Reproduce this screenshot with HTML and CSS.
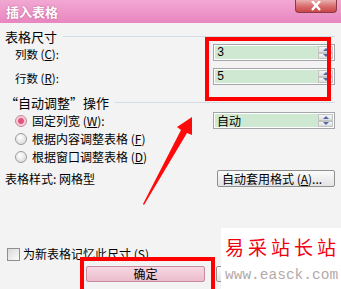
FILE: index.html
```html
<!doctype html>
<html lang="zh-CN">
<head>
	<meta charset="utf-8">
	<title>插入表格</title>
	<link rel="stylesheet" href="styles.css">
</head>
<body>
	<div class="dialog">

		<div class="titlebar">
			<span class="title">插入表格</span>
			<span class="close">
				<svg width="14" height="10" viewBox="0 0 14 10"><path d="M3 0 L11 9 M11 0 L3 9" stroke="#fff" stroke-width="2.4"/></svg>
			</span>
		</div>

		<div class="content">

			<div class="group-head group-head--first"><span>表格尺寸</span><i class="rule"></i></div>

			<div class="field-row field-row--first">
				<span class="label">列数 (<u>C</u>):</span>
				<div class="spin"><span class="spin-value">3</span><span class="spin-btns"><b class="up"></b><b class="down"></b></span></div>
			</div>

			<div class="field-row field-row--second">
				<span class="label">行数 (<u>R</u>):</span>
				<div class="spin"><span class="spin-value">5</span><span class="spin-btns"><b class="up"></b><b class="down"></b></span></div>
			</div>

			<div class="group-head group-head--second"><span>“自动调整”操作</span><i class="rule"></i></div>

			<div class="radio-block">
				<div class="radio-list">
					<label class="radio-row"><span class="radio radio--checked"></span>固定列宽 (<u>W</u>):</label>
					<label class="radio-row"><span class="radio"></span>根据内容调整表格 (<u>F</u>)</label>
					<label class="radio-row"><span class="radio"></span>根据窗口调整表格 (<u>D</u>)</label>
				</div>
				<div class="spin spin--select"><span class="spin-value">自动</span><span class="spin-btns"><b class="up"></b><b class="down"></b></span></div>
			</div>

			<div class="style-row">
				<span>表格样式: 网格型</span>
				<span class="btn btn--auto">自动套用格式 (<u>A</u>)...</span>
			</div>

			<label class="check-row"><span class="checkbox"></span>为新表格记忆此尺寸 (<u>S</u>)</label>

			<div class="buttons">
				<span class="btn btn--ok">确定</span>
				<span class="btn btn--cancel"></span>
			</div>

		</div>

		<!-- пометки поверх скриншота -->
		<div class="mark mark--inputs"></div>
		<div class="mark mark--ok"></div>
		<svg class="arrow" width="341" height="289" viewBox="0 0 341 289">
			<polygon points="192,117 192,135 187,133 144,205 143,204 181,130 177,127" fill="#ff0a0a"/>
		</svg>

		<div class="watermark">
			<div class="watermark-title">易采站长站</div>
			<div class="watermark-url">www.easck.com</div>
		</div>

	</div>
</body>
</html>
```

FILE: styles.css
```css
* {
	box-sizing: border-box;
	margin: 0;
	padding: 0;
}

body {
	background: #f3f3f3;
	font: 12px/1 "Noto Sans CJK SC", "DejaVu Sans", sans-serif;
	color: #000;
}

u {
	text-decoration: underline;
	text-underline-offset: 1px;
}

.dialog {
	position: relative;
	width: 341px;
	height: 289px;
	overflow: hidden;
	background: #f3f3f3;
}

/* Заголовок окна */

.titlebar {
	display: flex;
	justify-content: space-between;
	align-items: flex-start;
	height: 23px;
	padding-left: 6px;
	background: linear-gradient(#f2a8d3, #e886bf);
}

.title {
	margin-top: 5px;
	color: #fff;
	font-size: 13px;
	font-weight: 700;
	text-shadow: 0 0 2px rgba(140, 40, 90, .5);
}

.close {
	display: flex;
	justify-content: center;
	align-items: center;
	width: 42px;
	height: 13px;
	margin-right: 4px;
	background: linear-gradient(#eab0b0, #d86a6a 55%, #c84848);
	border: 1px solid #8c3b46;
	border-top: none;
	border-radius: 0 0 4px 4px;
}

/* Содержимое */

.content {
	padding: 0 6px 0 5px;
}

.group-head {
	display: flex;
	align-items: center;
	height: 14px;
	font-size: 13px;
}

.group-head--first {
	margin-top: 6px;
}

.group-head--second {
	margin-top: 10px;
}

.rule {
	flex: 1;
	height: 1px;
	margin-left: 6px;
	background: #d3dce4;
}

.field-row {
	display: flex;
	justify-content: space-between;
	align-items: center;
	height: 17px;
	padding-left: 10px;
}

.field-row--first {
	margin-top: 1px;
}

.field-row--second {
	margin-top: 7px;
}

.label {
	padding-top: 4px;
	font-size: 11.5px;
}

.spin {
	display: flex;
	width: 122px;
	height: 17px;
	padding: 1px;
	background: #fff;
	border: 1px solid #a2a6aa;
}

.spin-value {
	flex: 1;
	padding: 1px 0 0 2px;
	background: #cfe8d1;
	font-family: "Liberation Mono", "Noto Sans CJK SC", monospace;
	font-size: 12px;
}

.spin--select .spin-value {
	font-family: "Noto Sans CJK SC", sans-serif;
}

.spin-btns {
	display: flex;
	flex-direction: column;
	width: 15px;
}

.spin-btns b {
	display: flex;
	flex: 1;
	justify-content: center;
	align-items: center;
	background: linear-gradient(#f7f7f7, #dcdcdc);
	border: 1px solid #c4c4c4;
}

.spin-btns b::after {
	content: "";
	border-right: 3px solid transparent;
	border-left: 3px solid transparent;
}

.up::after {
	border-bottom: 3px solid #5368a8;
}

.down::after {
	border-top: 3px solid #5368a8;
}

/* Радиокнопки */

.radio-block {
	display: flex;
	justify-content: space-between;
	align-items: flex-start;
	margin-top: 3px;
}

.radio-list {
	display: flex;
	flex-direction: column;
	gap: 1px;
}

.radio-row {
	display: flex;
	align-items: center;
	height: 17px;
	padding-left: 10px;
}

.radio {
	width: 12px;
	height: 12px;
	margin-right: 5px;
	background: radial-gradient(circle at 40% 35%, #fff, #d2d2d2);
	border: 1px solid #9c9c9c;
	border-radius: 50%;
}

.radio--checked {
	background: radial-gradient(circle, #e2557a 0 2.5px, #f5c7d4 3.5px, #f8dfe7);
	border-color: #c7889a;
}

.style-row {
	display: flex;
	justify-content: space-between;
	align-items: center;
	margin-top: 5px;
}

.btn {
	display: flex;
	justify-content: center;
	align-items: center;
	height: 17px;
	border: 1px solid #8e8f8f;
	border-radius: 2px;
	background: linear-gradient(#fbfbfb, #e3e3e3);
}

.btn--auto {
	justify-content: flex-start;
	width: 118px;
	padding-left: 4px;
}

.check-row {
	display: flex;
	align-items: center;
	height: 14px;
	margin-top: 60px;
	padding-left: 2px;
}

.checkbox {
	width: 13px;
	height: 13px;
	margin-right: 3px;
	background: linear-gradient(135deg, #d9d9d9, #fbfbfb);
	border: 1px solid #8f8f8f;
}

.buttons {
	display: flex;
	gap: 11px;
	margin-top: 5px;
	padding-left: 81px;
}

.btn--ok {
	width: 119px;
	height: 16px;
	background: linear-gradient(#f6d8e2, #ebbccb);
	border-color: #c98c9f;
}

.btn--cancel {
	width: 119px;
	height: 16px;
}

/* Пометки поверх */

.mark {
	position: absolute;
	border: 4px solid #ff0000;
}

.mark--inputs {
	top: 37px;
	left: 205px;
	width: 126px;
	height: 64px;
}

.mark--ok {
	top: 257px;
	left: 80px;
	width: 135px;
	height: 40px;
}

.arrow {
	position: absolute;
	top: 0;
	left: 0;
	pointer-events: none;
}

.watermark {
	position: absolute;
	top: 228px;
	left: 221px;
	width: 120px;
	height: 61px;
	padding: 8px 0 0 4px;
	background: #fff;
}

.watermark-title {
	color: #f00010;
	font-family: "Noto Sans CJK SC", serif;
	font-size: 19px;
	letter-spacing: 4px;
	line-height: 22px;
}

.watermark-url {
	margin-top: 11px;
	color: #b5a9aa;
	font-family: "Liberation Mono", monospace;
	font-size: 14.5px;
	line-height: 12px;
}
```
